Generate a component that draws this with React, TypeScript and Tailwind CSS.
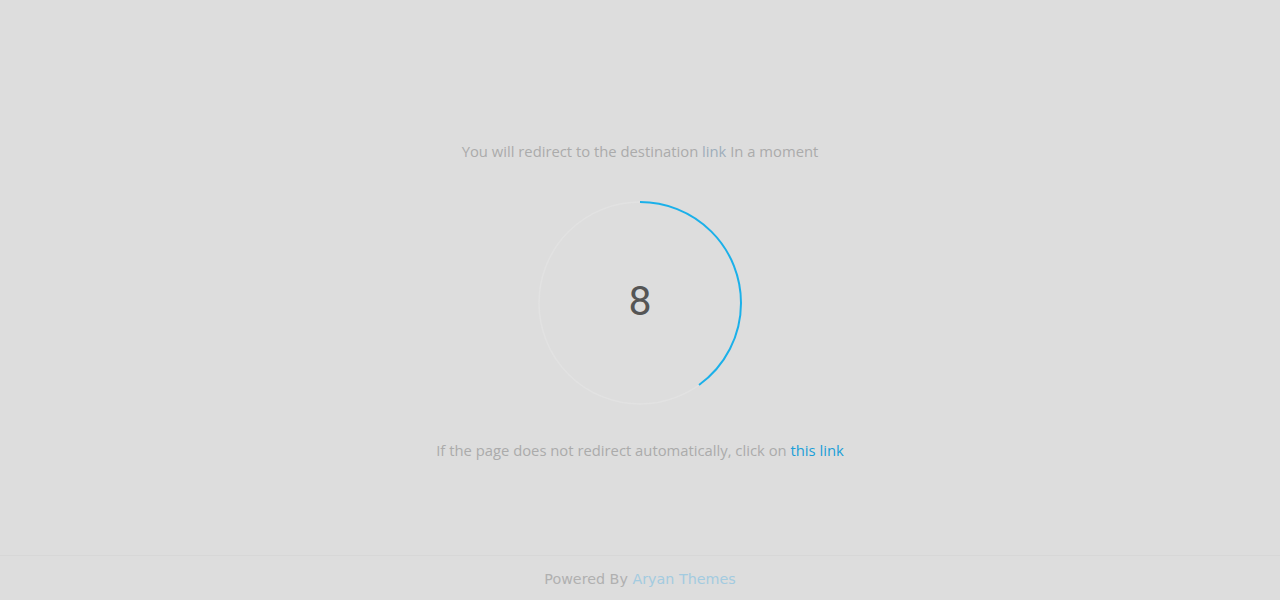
const SECONDS = 8;
const TOTAL = 20;

function Countdown({ value }: { value: number }) {
  const r = 101;
  const c = 2 * Math.PI * r;
  const frac = value / TOTAL;
  return (
    <div className="relative h-[204px] w-[204px]">
      <svg width="204" height="204" viewBox="0 0 204 204" className="absolute inset-0">
        <circle cx="102" cy="102" r={r} fill="none" stroke="#e2e2e2" strokeWidth="1.5" />
        <circle
          cx="102"
          cy="102"
          r={r}
          fill="none"
          stroke="#1bb0e9"
          strokeWidth="2"
          strokeDasharray={`${c * frac} ${c}`}
          transform="rotate(-90 102 102)"
        />
      </svg>
      <div className="absolute inset-0 flex items-center justify-center pb-[2px] font-['Roboto',sans-serif] text-[41px] text-[#555555]">
        {value}
      </div>
    </div>
  );
}

export default function App() {
  return (
    <div className="flex min-h-screen flex-col bg-[#dddddd] font-['Open_Sans','Noto_Sans',sans-serif] text-[#ababab]">
      <main className="flex flex-1 flex-col items-center pt-[139px]">
        <p className="text-[14.8px] leading-6">
          You will redirect to the destination <span className="text-[#9eadbb]">link</span> In a moment
        </p>
        <div className="mt-[38px]">
          <Countdown value={SECONDS} />
        </div>
        <p className="mt-[33px] text-[14.8px] leading-6">
          If the page does not redirect automatically, click on{" "}
          <a className="text-[#1a9fd8]">this link</a>
        </p>
      </main>
      <footer className="flex h-[45px] items-center justify-center border-t border-[#d7d7d7] pt-[3px] font-['DejaVu_Sans',sans-serif] text-[14.3px] text-[#b0b0b0]">
        Powered By&nbsp;<span className="text-[#a3cbe0]">Aryan Themes</span>
      </footer>
    </div>
  );
}
